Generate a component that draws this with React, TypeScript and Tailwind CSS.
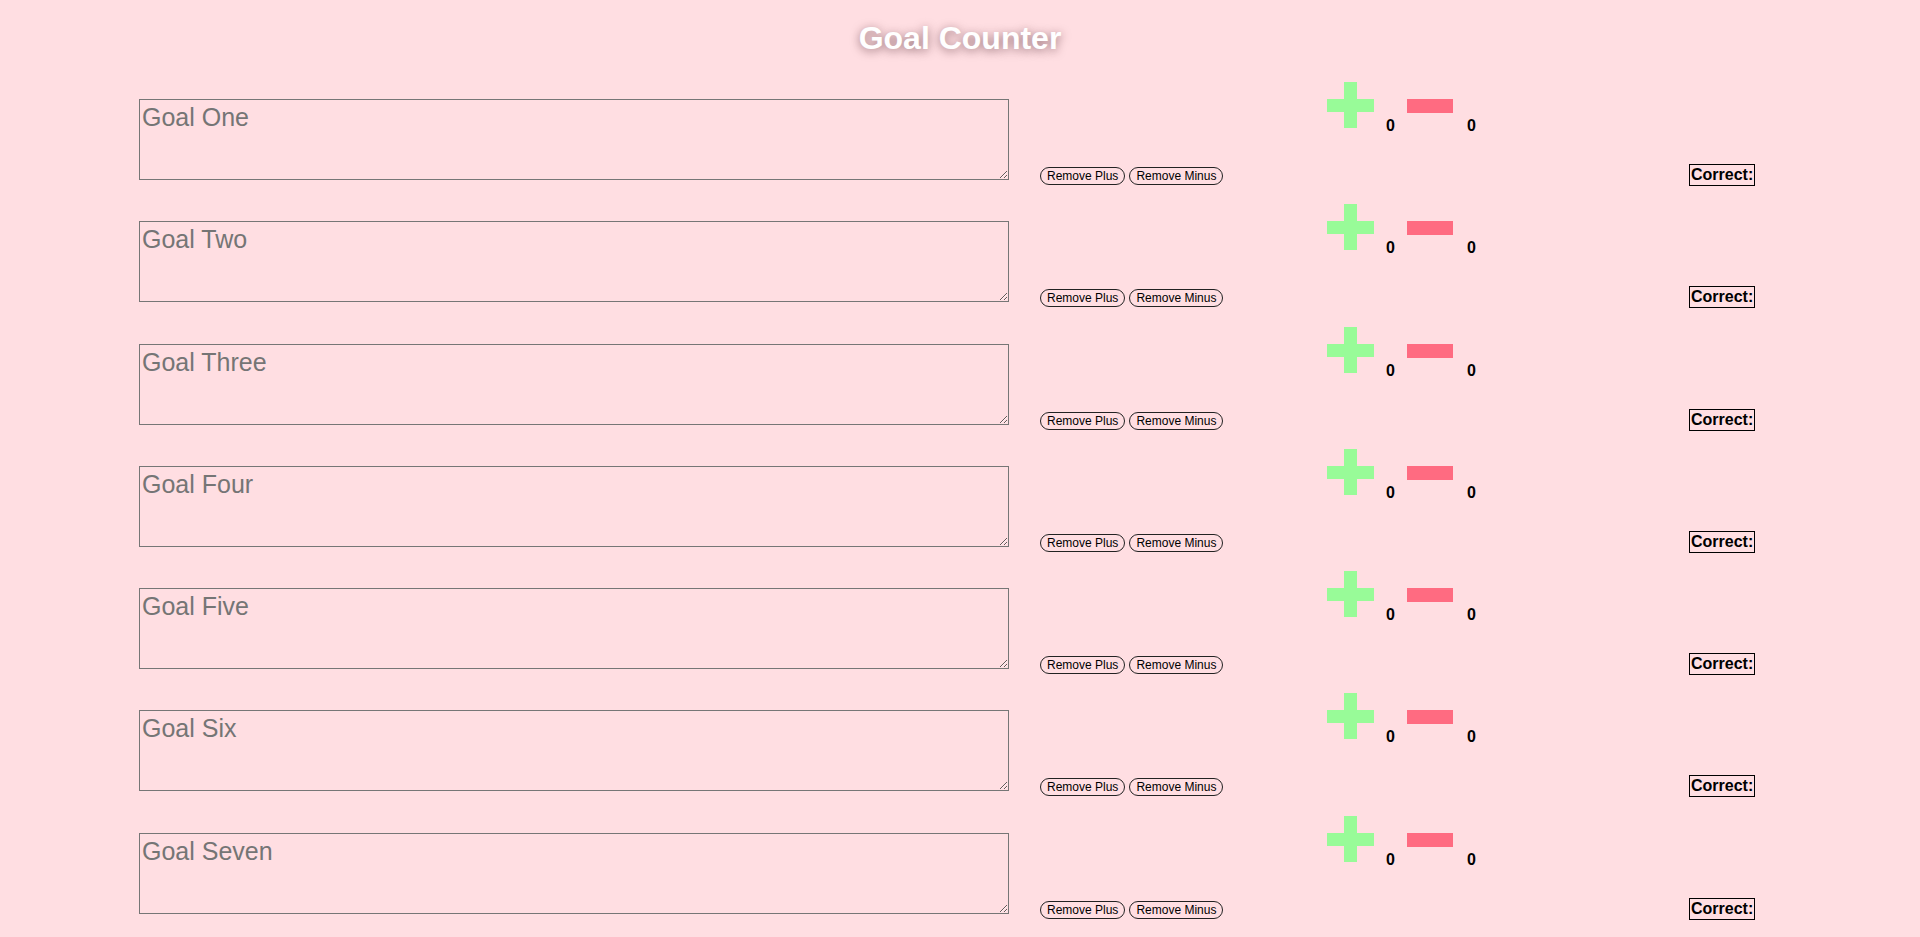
import React from "react";

const goals = ["One", "Two", "Three", "Four", "Five", "Six", "Seven"];

function Plus() {
  return (
    <svg width="47" height="46" viewBox="0 0 47 46" className="block">
      <rect x="17" y="0" width="13" height="46" fill="#98fb98" />
      <rect x="0" y="17" width="47" height="13" fill="#98fb98" />
    </svg>
  );
}

function Row({ name }: { name: string }) {
  return (
    <div className="flex items-start h-[122.3px] pl-[139px]">
      <textarea
        placeholder={`Goal ${name}`}
        className="mt-[21px] w-[870px] h-[81px] shrink-0 border border-[#767676] bg-transparent px-[2px] pt-[3px] pb-[1px] text-[25px] leading-[29px] text-black placeholder:text-[#757575] outline-none"
      />
      <div className="w-[318px] shrink-0 pl-[31px] mt-[89px] flex gap-[4px]">
        <button className="h-[18px] px-[6px] rounded-full border border-[#222] text-[12px] leading-[14px] text-black bg-transparent whitespace-nowrap">
          Remove Plus
        </button>
        <button className="h-[18px] px-[6px] rounded-full border border-[#222] text-[12px] leading-[14px] text-black bg-transparent whitespace-nowrap">
          Remove Minus
        </button>
      </div>
      <div className="w-[362px] shrink-0 flex items-start">
        <div className="mt-[4px]">
          <Plus />
        </div>
        <span className="ml-[12px] mt-[39px] text-[16px] leading-[18px] font-bold text-black">0</span>
        <div className="ml-[12px] mt-[21px] w-[46px] h-[14px] bg-[#ff6b81]" />
        <span className="ml-[14px] mt-[39px] text-[16px] leading-[18px] font-bold text-black">0</span>
      </div>
      <div className="mt-[86px] border border-black px-[1px] h-[22px] text-[16px] leading-[20px] font-bold text-black">
        Correct:
      </div>
    </div>
  );
}

export default function App() {
  return (
    <div className="min-h-screen bg-[#ffdee2] font-['Liberation_Sans',Arial,sans-serif]">
      <h1 className="pt-[20px] h-[78px] text-center text-[32px] leading-[37px] font-bold text-white [text-shadow:0_2px_10px_rgba(60,20,30,0.55)]">
        Goal Counter
      </h1>
      {goals.map((g) => (
        <Row key={g} name={g} />
      ))}
    </div>
  );
}
